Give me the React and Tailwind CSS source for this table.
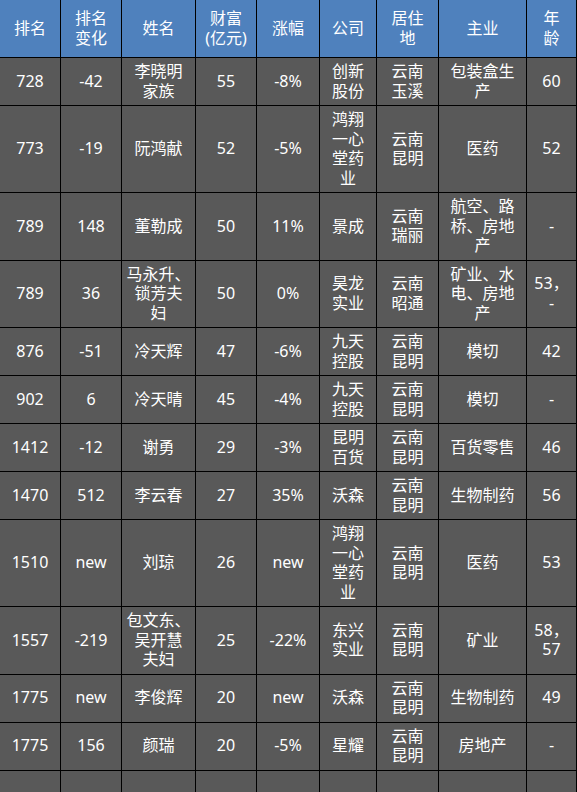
import React from 'react';

const headers = ['排名', '排名\n变化', '姓名', '财富\n(亿元)', '涨幅', '公司', '居住\n地', '主业', '年\n龄'];

const rows = [
    ['728', '-42', '李晓明\n家族', '55', '-8%', '创新\n股份', '云南\n玉溪', '包装盒生\n产', '60'],
    ['773', '-19', '阮鸿献', '52', '-5%', '鸿翔\n一心\n堂药\n业', '云南\n昆明', '医药', '52'],
    ['789', '148', '董勒成', '50', '11%', '景成', '云南\n瑞丽', '航空、路\n桥、房地\n产', '-'],
    ['789', '36', '马永升、\n锁芳夫\n妇', '50', '0%', '昊龙\n实业', '云南\n昭通', '矿业、水\n电、房地\n产', '53，\n-'],
    ['876', '-51', '冷天辉', '47', '-6%', '九天\n控股', '云南\n昆明', '模切', '42'],
    ['902', '6', '冷天晴', '45', '-4%', '九天\n控股', '云南\n昆明', '模切', '-'],
    ['1412', '-12', '谢勇', '29', '-3%', '昆明\n百货', '云南\n昆明', '百货零售', '46'],
    ['1470', '512', '李云春', '27', '35%', '沃森', '云南\n昆明', '生物制药', '56'],
    ['1510', 'new', '刘琼', '26', 'new', '鸿翔\n一心\n堂药\n业', '云南\n昆明', '医药', '53'],
    ['1557', '-219', '包文东、\n吴开慧\n夫妇', '25', '-22%', '东兴\n实业', '云南\n昆明', '矿业', '58，\n57'],
    ['1775', 'new', '李俊辉', '20', 'new', '沃森', '云南\n昆明', '生物制药', '49'],
    ['1775', '156', '颜瑞', '20', '-5%', '星耀', '云南\n昆明', '房地产', '-'],
    ['', '', '', '', '', '', '', '', ''],
];

const Cell = ({ text, head }) => (
    <div
        className={`flex items-center justify-center text-center whitespace-pre border-r border-b border-black ${
            head ? 'bg-[#4f81bd] py-[9px]' : 'bg-[#595959] py-[4px] min-h-[48px]'
        }`}
    >
        {text}
    </div>
);

const App = () => {
    return (
        <div
            className="w-[577px] h-[792px] overflow-hidden bg-[#595959] text-white text-[16px] leading-[19.5px]"
            style={{ fontFamily: '"Noto Sans", "Noto Sans CJK SC", sans-serif' }}
        >
            <div className="grid grid-cols-[61px_61px_74px_61px_63px_57px_62px_88px_50px]">
                {headers.map((h, i) => (
                    <Cell key={'h' + i} text={h} head />
                ))}
                {rows.map((row, r) =>
                    row.map((c, i) => <Cell key={r + '-' + i} text={c} />)
                )}
            </div>
        </div>
    );
};

export default App;
